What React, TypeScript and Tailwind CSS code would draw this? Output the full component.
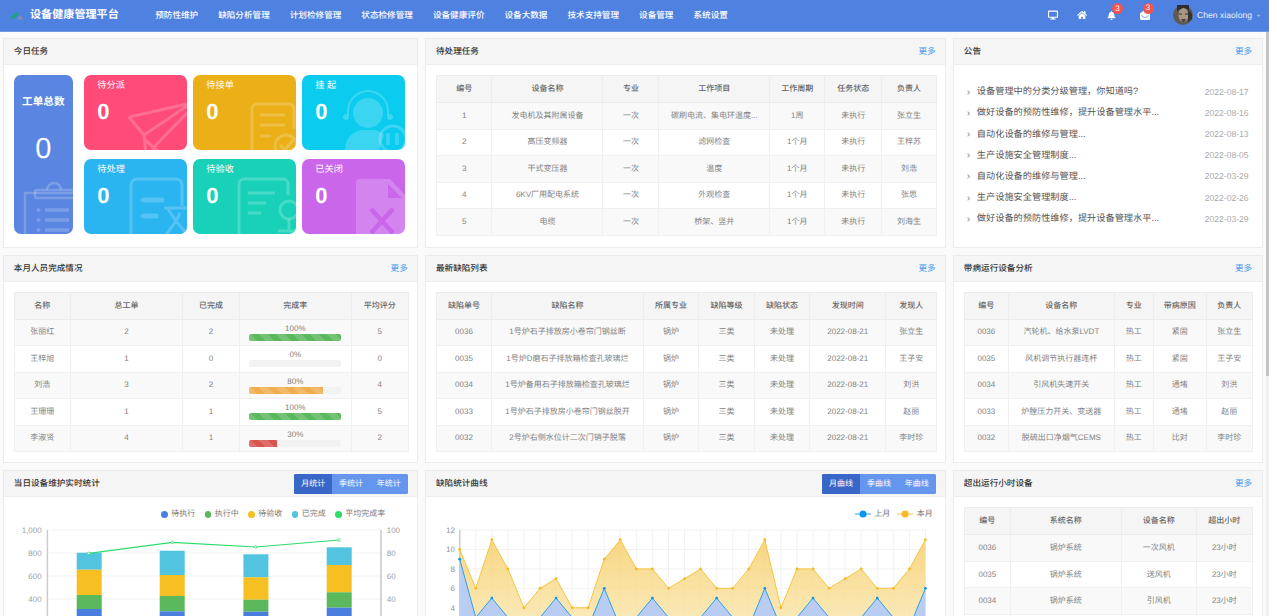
import React from "react";
import { FaBell, FaDesktop, FaEnvelopeOpen, FaHome, FaCaretDown, FaAngleRight } from "react-icons/fa";

const NAV = ["预防性维护", "缺陷分析管理", "计划检修管理", "状态检修管理", "设备健康评价", "设备大数据", "技术支持管理", "设备管理", "系统设置"];

function Logo() {
  return (
    <svg width="15" height="11" viewBox="0 0 15 11" className="shrink-0">
      <path d="M1 8 L7 2 L10 3.5 L4 9.5 Z" fill="#1fa37a" />
      <path d="M8 9.5 L11 5 L14.5 9.5 Z" fill="#7f8fb5" />
    </svg>
  );
}

function Avatar() {
  return (
    <svg width="20" height="20" viewBox="0 0 20 20" className="shrink-0">
      <circle cx="10" cy="10" r="10" fill="#5d5a55" />
      <path d="M4 0 H16 V6 C15 3 5 3 4 7 Z" fill="#2f2d2b" />
      <ellipse cx="10.5" cy="10" rx="5" ry="7" fill="#a89684" />
      <path d="M6 9 H9 M12 9 H15" stroke="#3b332c" strokeWidth="1" />
      <path d="M8 14 H13 L11.5 17 H9.5 Z" fill="#4c433b" />
      <path d="M15 4 L19 9 V14 L15 17 Z" fill="#35322f" />
    </svg>
  );
}

function Badge({ pos }: { pos: string }) {
  return (
    <span className={`absolute -top-[7.5px] flex h-[11px] w-[11px] items-center justify-center rounded-full bg-[#f0544c] text-[8px] leading-none text-white ${pos}`}>
      3
    </span>
  );
}

function Header() {
  return (
    <header className="flex h-[32px] shrink-0 items-center border-b border-[#7299e8] bg-[#4f81e0] pb-[1px] pl-[9px] text-white">
      <Logo />
      <div className="ml-[6px] w-[90px] text-[11.1px] font-bold whitespace-nowrap">设备健康管理平台</div>
      <nav className="ml-[35.2px] flex gap-[20px] text-[8.6px] font-medium whitespace-nowrap">
        {NAV.map((n) => (
          <span key={n}>{n}</span>
        ))}
      </nav>
      <div className="ml-auto flex items-center pr-[7px]">
        <FaDesktop className="mr-[19px] text-[10px]" />
        <FaHome className="mr-[20.6px] text-[10px]" />
        <span className="relative mr-[23.6px]">
          <FaBell className="text-[9px]" />
          <Badge pos="left-[4.6px]" />
        </span>
        <span className="relative mr-[23px]">
          <FaEnvelopeOpen className="text-[10px]" />
          <Badge pos="left-[2.5px]" />
        </span>
        <Avatar />
        <span className="ml-[4px] text-[8.6px] whitespace-nowrap text-[#e8eefb]">Chen xiaolong</span>
        <FaCaretDown className="ml-[3px] text-[7px] text-[#9db9ee]" />
      </div>
    </header>
  );
}

function Panel({ title, right, children }: { title: string; right?: React.ReactNode; children: React.ReactNode }) {
  return (
    <section className="min-w-0 border border-[#ececec] bg-white">
      <div className="flex h-[26px] items-center justify-between border-b border-[#eeeeee] bg-[#f5f5f5] pr-[9.5px] pl-[9.5px]">
        <span className="text-[8.6px] font-medium text-[#333333]">{title}</span>
        {right ?? <span className="text-[8.6px] text-[#4a9cec]">更多</span>}
      </div>
      {children}
    </section>
  );
}

function ButtonGroup({ items }: { items: string[] }) {
  return (
    <div className="flex h-[20px] w-[113.5px] overflow-hidden rounded-[1.5px] bg-[#6596ee] text-[8px] text-white">
      {items.map((t, i) => (
        <span key={t} className={i === 0 ? "flex flex-1 items-center justify-center bg-[#3867c8]" : "flex flex-1 items-center justify-center"}>
          {t}
        </span>
      ))}
    </div>
  );
}

function DataTable({ cols, heads, rows }: { cols: string[]; heads: string[]; rows: React.ReactNode[][] }) {
  return (
    <div className="px-[9.5px] pt-[10px]">
      <table className="w-full table-fixed border-collapse border border-[#eaeaea] text-center text-[8px]">
        <colgroup>
          {cols.map((c, i) => (
            <col key={i} className={c} />
          ))}
        </colgroup>
        <thead>
          <tr className="h-[27px] bg-[#f5f5f5]">
            {heads.map((h) => (
              <th key={h} className="border border-[#ececec] p-0 font-medium text-[#666666]">
                {h}
              </th>
            ))}
          </tr>
        </thead>
        <tbody>
          {rows.map((r, i) => (
            <tr key={i} className={i % 2 === 0 ? "h-[26.5px] bg-[#f9f9f9]" : "h-[26.5px] bg-white"}>
              {r.map((c, j) => (
                <td key={j} className="overflow-hidden border border-[#f0f0f0] p-0 whitespace-nowrap text-[#828282]">
                  {c}
                </td>
              ))}
            </tr>
          ))}
        </tbody>
      </table>
    </div>
  );
}

function Progress({ value, fill }: { value: number; fill: string }) {
  return (
    <div className="px-[9.5px]">
      <div className="text-[8px] leading-[10px] text-[#828282]">{value}%</div>
      <div className="h-[7px] overflow-hidden rounded-[2px] bg-[#f2f2f2]">
        <div className={fill} style={{ width: `${value}%` }} />
      </div>
    </div>
  );
}

const GREEN = "h-full bg-[#5cb85c] bg-[repeating-linear-gradient(45deg,rgba(255,255,255,.15)_0,rgba(255,255,255,.15)_6px,transparent_6px,transparent_12px)]";
const ORANGE = "h-full bg-[#f0ad4e] bg-[repeating-linear-gradient(45deg,rgba(255,255,255,.15)_0,rgba(255,255,255,.15)_6px,transparent_6px,transparent_12px)]";
const RED = "h-full bg-[#d9534f] bg-[repeating-linear-gradient(45deg,rgba(255,255,255,.15)_0,rgba(255,255,255,.15)_6px,transparent_6px,transparent_12px)]";

function StatCard({ label, bg, children }: { label: string; bg: string; children: React.ReactNode }) {
  return (
    <div className={`relative h-[74.5px] overflow-hidden rounded-[7px] pt-[4px] pl-[13.5px] text-white ${bg}`}>
      <div className="text-[9.2px] leading-[13px]">{label}</div>
      <div className="mt-[6.5px] text-[22px] leading-[26px] font-bold">0</div>
      <svg viewBox="0 0 103 74.5" className="absolute inset-0 h-full w-full" fill="none" stroke="#ffffff" strokeOpacity="0.2" strokeWidth="3">
        {children}
      </svg>
    </div>
  );
}

function TodayTasks() {
  return (
    <div className="flex gap-[11px] px-[9.5px] pt-[10px]">
      <div className="relative h-[159px] w-[59px] shrink-0 overflow-hidden rounded-[7px] bg-[#5a85e0] text-center text-white">
        <div className="mt-[19.5px] text-[10.6px] leading-[14px] font-bold">工单总数</div>
        <div className="mt-[23px] text-[29px] leading-[34px]">0</div>
        <svg viewBox="0 0 59 159" className="absolute inset-0 h-full w-full" fill="none" stroke="#ffffff" strokeOpacity="0.2" strokeWidth="2.5">
          <path d="M18 118 H11 V159 M59 118 H18" />
          <rect x="21" y="115" width="42" height="8" rx="2" />
          <path d="M33 115 a7 7 0 0 1 14 0" />
          <circle cx="24.5" cy="135" r="2" fill="#ffffff" fillOpacity="0.2" stroke="none" />
          <circle cx="24.5" cy="145" r="2" fill="#ffffff" fillOpacity="0.2" stroke="none" />
          <circle cx="24.5" cy="155" r="2" fill="#ffffff" fillOpacity="0.2" stroke="none" />
          <path d="M31 135 H55 M31 145 H55 M31 155 H55" strokeWidth="3.5" />
        </svg>
      </div>
      <div className="grid flex-1 grid-cols-[103px_103px_103px] gap-x-[6px] gap-y-[9.5px]">
        <StatCard label="待分派" bg="bg-[#ff4b78]">
          <path d="M45 42 L103 29 M45 42 L60 60 L103 31 M60 60 L62 80 M68 74 L103 38 M60 64 L76 78" />
        </StatCard>
        <StatCard label="待接单" bg="bg-[#ebb017]">
          <path d="M59 78 V34 a5 5 0 0 1 5 -5 H96 a5 5 0 0 1 5 5 V54" />
          <path d="M67 40 H92 M67 50 H92 M67 61 H78" />
          <circle cx="93" cy="71" r="11" />
          <path d="M87 70 L92 75 L100 65" />
        </StatCard>
        <StatCard label="挂 起" bg="bg-[#0bcbee]">
          <circle cx="66" cy="38" r="15" fill="#ffffff" fillOpacity="0.2" stroke="none" />
          <path d="M46 40 V36 a20 20 0 0 1 40 0 V40" strokeWidth="2" />
          <circle cx="44" cy="42" r="3" fill="#ffffff" fillOpacity="0.2" stroke="none" />
          <circle cx="88" cy="42" r="3" fill="#ffffff" fillOpacity="0.2" stroke="none" />
          <path d="M43 75 C43 62 52 55 62 55 H72 C76 55 80 57 82 60 L77 75 Z" fill="#ffffff" fillOpacity="0.2" stroke="none" />
          <circle cx="91" cy="64" r="13" />
          <path d="M86 58 V70 M95 58 V70" strokeWidth="3.5" />
        </StatCard>
        <StatCard label="待处理" bg="bg-[#2ab4f0]">
          <path d="M47 78 V26 a6 6 0 0 1 6 -6 H92 a6 6 0 0 1 6 6 V47" />
          <path d="M59 41 H78 M59 57 H72" strokeWidth="5" strokeLinecap="round" />
          <path d="M80 49 H103 M84 50 L92 62 L82 76 M96 54 L92 62 L102 74" />
        </StatCard>
        <StatCard label="待验收" bg="bg-[#19d1b8]">
          <path d="M46 78 V25 a5 5 0 0 1 5 -5 H90 a5 5 0 0 1 5 5 V36" />
          <path d="M55 34 H82 M55 44 H73 M55 54 H68" />
          <circle cx="96" cy="51" r="9" />
          <path d="M96 60 V71 M85 72 H103" />
        </StatCard>
        <StatCard label="已关闭" bg="bg-[#c966ea]">
          <path d="M54 78 V24 a4 4 0 0 1 4 -4 H88 L103 36 V78 Z" fill="#ffffff" fillOpacity="0.2" stroke="none" />
          <path d="M86 25 V39 H100 Z" fill="#c966ea" stroke="none" />
          <path d="M69 50 L91 74 M91 50 L69 74" stroke="#c966ea" strokeOpacity="1" strokeWidth="4.5" />
        </StatCard>
      </div>
    </div>
  );
}

const NOTICES: [string, string][] = [
  ["设备管理中的分类分级管理，你知道吗?", "2022-08-17"],
  ["做好设备的预防性维修，提升设备管理水平...", "2022-08-16"],
  ["自动化设备的维修与管理...", "2022-08-13"],
  ["生产设施安全管理制度...", "2022-08-05"],
  ["自动化设备的维修与管理...", "2022-03-29"],
  ["生产设施安全管理制度...", "2022-02-26"],
  ["做好设备的预防性维修，提升设备管理水平...", "2022-03-29"],
];

function Notices() {
  return (
    <ul className="pt-[16.5px] pr-[13px] pl-[11.5px]">
      {NOTICES.map(([t, d], i) => (
        <li key={i} className="flex h-[21.2px] items-center text-[9.2px] text-[#555555]">
          <FaAngleRight className="mr-[5.5px] w-[5.5px] text-[7px] text-[#aaaaaa]" />
          <span className="flex-1 whitespace-nowrap">{t}</span>
          <span className="text-[8.6px] text-[#aaaaaa]">{d}</span>
        </li>
      ))}
    </ul>
  );
}

function LegendDot({ color, label }: { color: string; label: string }) {
  return (
    <span className="flex items-center gap-[3.5px]">
      <span className={`h-[6.5px] w-[6.5px] rounded-full ${color}`} />
      {label}
    </span>
  );
}

const BARS = [
  { x: 77, s: [553.7, 570.7, 596, 610] },
  { x: 160, s: [551.7, 576, 597, 612.3] },
  { x: 243.7, s: [555.3, 578.3, 600.7, 612.7] },
  { x: 327, s: [548.3, 566, 593.3, 608.7] },
];

function BarChart() {
  const line: [number, number][] = [[89, 554.3], [172.7, 543.3], [256, 548], [339.3, 541]];
  return (
    <div>
      <div className="mt-[10px] flex h-[14px] items-center justify-end gap-[9.5px] pr-[32px] text-[8px] text-[#777777]">
        <LegendDot color="bg-[#4a7fe0]" label="待执行" />
        <LegendDot color="bg-[#5cb85c]" label="执行中" />
        <LegendDot color="bg-[#f6c022]" label="待验收" />
        <LegendDot color="bg-[#52c4e0]" label="已完成" />
        <LegendDot color="bg-[#2cdc6b]" label="平均完成率" />
      </div>
      <svg width="413" height="100" viewBox="4.3 522 413 100" className="block">
        {[531, 554, 577, 600].map((y) => (
          <line key={y} x1="47.7" x2="381.3" y1={y} y2={y} stroke="#f2f2f2" strokeWidth="1" />
        ))}
        <line x1="47.7" x2="47.7" y1="531" y2="622" stroke="#cccccc" strokeWidth="1.5" />
        <line x1="381.3" x2="381.3" y1="531" y2="622" stroke="#aaaaaa" strokeWidth="1" />
        {[["1,000", 531], ["800", 554], ["600", 577], ["400", 600]].map(([t, y]) => (
          <text key={t} x="42" y={Number(y) + 3} textAnchor="end" fontSize="8" fill="#a0a0a0" fontFamily="'Liberation Sans', sans-serif">
            {t}
          </text>
        ))}
        {[["100", 531], ["80", 554], ["60", 577], ["40", 600]].map(([t, y]) => (
          <text key={t} x="387" y={Number(y) + 3} fontSize="8" fill="#a0a0a0" fontFamily="'Liberation Sans', sans-serif">
            {t}
          </text>
        ))}
        {BARS.map((b) => (
          <g key={b.x}>
            <rect x={b.x} y={b.s[0]} width="25" height={b.s[1] - b.s[0]} fill="#52c4e0" />
            <rect x={b.x} y={b.s[1]} width="25" height={b.s[2] - b.s[1]} fill="#f6c022" />
            <rect x={b.x} y={b.s[2]} width="25" height={b.s[3] - b.s[2]} fill="#5cb85c" />
            <rect x={b.x} y={b.s[3]} width="25" height={630 - b.s[3]} fill="#4a7fe0" />
          </g>
        ))}
        <polyline points={line.map((p) => p.join(",")).join(" ")} fill="none" stroke="#2cdc6b" strokeWidth="1.2" />
        {line.map((p) => (
          <circle key={p[0]} cx={p[0]} cy={p[1]} r="1.3" fill="#ffffff" stroke="#2cdc6b" strokeWidth="0.7" />
        ))}
      </svg>
    </div>
  );
}

const YELLOW = [10, 6, 11, 8, 4, 6, 7, 4, 4, 9, 11, 8, 8, 6, 7, 8, 6, 6, 8, 11, 4, 8, 8, 6, 7, 8, 6, 6, 8, 11];
const BLUE = [9, 3, 5, 3, 2, 3, 5, 3, 2, 6, 2, 3, 5, 3, 2, 3, 5, 3, 2, 6, 2, 3, 5, 3, 2, 3, 5, 3, 2, 6];

function AreaChart() {
  const px = (i: number) => 460.7 + i * 16.06;
  const py = (v: number) => 531 + (12 - v) * 9.72;
  const pts = (s: number[]) => s.map((v, i) => `${px(i)},${py(v)}`).join(" ");
  return (
    <div>
      <div className="mt-[10px] flex h-[14px] items-center justify-end gap-[7px] pr-[12.5px] text-[8px] text-[#777777]">
        <span className="flex items-center gap-[3.5px]">
          <svg width="16" height="8" viewBox="0 0 16 8">
            <line x1="0" x2="16" y1="4" y2="4" stroke="#2f9fea" strokeWidth="1" />
            <circle cx="8" cy="4" r="3.5" fill="#0a96f0" />
          </svg>
          上月
        </span>
        <span className="flex items-center gap-[3.5px]">
          <svg width="16" height="8" viewBox="0 0 16 8">
            <line x1="0" x2="16" y1="4" y2="4" stroke="#f7c445" strokeWidth="1" />
            <circle cx="8" cy="4" r="3.5" fill="#f7b924" />
          </svg>
          本月
        </span>
      </div>
      <svg width="518" height="100" viewBox="427 522 518 100" className="block">
        <defs>
          <linearGradient id="yf" x1="0" y1="531" x2="0" y2="640" gradientUnits="userSpaceOnUse">
            <stop offset="0" stopColor="#f6cc62" stopOpacity="0.85" />
            <stop offset="1" stopColor="#f9e7b0" stopOpacity="0.75" />
          </linearGradient>
        </defs>
        {Array.from({ length: 30 }, (_, i) => (
          <line key={i} x1={px(i)} x2={px(i)} y1="531" y2="622" stroke="#efefef" strokeWidth="0.8" />
        ))}
        {[12, 10, 8, 6, 4].map((v) => (
          <line key={v} x1="460.7" x2="926.4" y1={py(v)} y2={py(v)} stroke="#efefef" strokeWidth="0.8" />
        ))}
        <line x1="460.7" x2="460.7" y1="531" y2="622" stroke="#cccccc" strokeWidth="1.5" />
        {[12, 10, 8, 6, 4].map((v) => (
          <text key={v} x="456" y={py(v) + 3} textAnchor="end" fontSize="8" fill="#909090" fontFamily="'Liberation Sans', sans-serif">
            {v}
          </text>
        ))}
        <polygon points={`460.7,640 ${pts(YELLOW)} 926.4,640`} fill="url(#yf)" />
        <polygon points={`460.7,640 ${pts(BLUE)} 926.4,640`} fill="#b9cdf3" />
        <polyline points={pts(YELLOW)} fill="none" stroke="#f7c445" strokeWidth="1" />
        <polyline points={pts(BLUE)} fill="none" stroke="#2f9fea" strokeWidth="1" />
        {YELLOW.map((v, i) => (
          <circle key={i} cx={px(i)} cy={py(v)} r="1.4" fill="#f7b924" />
        ))}
        {BLUE.map((v, i) => (
          <circle key={i} cx={px(i)} cy={py(v)} r="1.4" fill="#0a96f0" />
        ))}
      </svg>
    </div>
  );
}

const STAFF: React.ReactNode[][] = [
  ["张丽红", 2, 2, <Progress value={100} fill={GREEN} />, 5],
  ["王梓旭", 1, 0, <Progress value={0} fill={GREEN} />, 0],
  ["刘浩", 3, 2, <Progress value={80} fill={ORANGE} />, 4],
  ["王珊珊", 1, 1, <Progress value={100} fill={GREEN} />, 5],
  ["李淑贤", 4, 1, <Progress value={30} fill={RED} />, 2],
];

const PENDING: React.ReactNode[][] = [
  [1, "发电机及其附属设备", "一次", "碳刷电流、集电环温度...", "1周", "未执行", "张立生"],
  [2, "高压变频器", "一次", "滤网检查", "1个月", "未执行", "王梓苏"],
  [3, "干式变压器", "一次", "温度", "1个月", "未执行", "刘浩"],
  [4, "6KV厂用配电系统", "一次", "外观检查", "1个月", "未执行", "张思"],
  [5, "电缆", "一次", "桥架、竖井", "1个月", "未执行", "刘海生"],
];

const DEFECTS: React.ReactNode[][] = [
  ["0036", "1号炉石子排放房小卷帘门钢丝断", "锅炉", "三类", "未处理", "2022-08-21", "张立生"],
  ["0035", "1号炉D磨石子排放箱检查孔玻璃烂", "锅炉", "三类", "未处理", "2022-08-21", "王子安"],
  ["0034", "1号炉备用石子排放箱检查孔玻璃烂", "锅炉", "三类", "未处理", "2022-08-21", "刘洪"],
  ["0033", "1号炉石子排放房小卷帘门钢丝脱开", "锅炉", "三类", "未处理", "2022-08-21", "赵丽"],
  ["0032", "2号炉右侧水位计二次门销子脱落", "锅炉", "三类", "未处理", "2022-08-21", "李时珍"],
];

const SICK: React.ReactNode[][] = [
  ["0036", "汽轮机、给水泵LVDT", "热工", "紧固", "张立生"],
  ["0035", "风机调节执行器连杆", "热工", "紧固", "王子安"],
  ["0034", "引风机失速开关", "热工", "通堵", "刘洪"],
  ["0033", "炉膛压力开关、变送器", "热工", "通堵", "赵丽"],
  ["0032", "脱硫出口净烟气CEMS", "热工", "比对", "李时珍"],
];

const OVER: React.ReactNode[][] = [
  ["0036", "锅炉系统", "一次风机", "23小时"],
  ["0035", "锅炉系统", "送风机", "23小时"],
  ["0034", "锅炉系统", "引风机", "23小时"],
  ["", "", "", ""],
];

export default function App() {
  return (
    <div className="flex h-[616px] w-full flex-col overflow-hidden bg-[#fafafa] font-['Liberation_Sans','Noto_Sans_CJK_SC',sans-serif] [text-rendering:geometricPrecision]">
      <Header />
      <div className="flex min-h-0 flex-1">
        <main className="grid flex-1 grid-cols-[415px_520.7px_309.3px] grid-rows-[209.7px_208.6px_209px] gap-x-[7.2px] gap-y-[7px] pt-[6px] pl-[3.3px]">
          <Panel title="今日任务" right={<span />}>
            <TodayTasks />
          </Panel>
          <Panel title="待处理任务">
            <DataTable
              cols={["w-[55.5px]", "w-[111px]", "w-[56px]", "w-[110.5px]", "w-[55.5px]", "w-[56.5px]", "w-[55px]"]}
              heads={["编号", "设备名称", "专业", "工作项目", "工作周期", "任务状态", "负责人"]}
              rows={PENDING}
            />
          </Panel>
          <Panel title="公告">
            <Notices />
          </Panel>
          <Panel title="本月人员完成情况">
            <DataTable
              cols={["w-[56px]", "w-[112.5px]", "w-[56.5px]", "w-[112px]", "w-[57px]"]}
              heads={["名称", "总工单", "已完成", "完成率", "平均评分"]}
              rows={STAFF}
            />
          </Panel>
          <Panel title="最新缺陷列表">
            <DataTable
              cols={["w-[55px]", "w-[152px]", "w-[55px]", "w-[56px]", "w-[55px]", "w-[76.5px]", "w-[50.5px]"]}
              heads={["缺陷单号", "缺陷名称", "所属专业", "缺陷等级", "缺陷状态", "发现时间", "发现人"]}
              rows={DEFECTS}
            />
          </Panel>
          <Panel title="带病运行设备分析">
            <DataTable
              cols={["w-[44px]", "w-[106px]", "w-[39px]", "w-[53px]", "w-[46px]"]}
              heads={["编号", "设备名称", "专业", "带病原因", "负责人"]}
              rows={SICK}
            />
          </Panel>
          <Panel title="当日设备维护实时统计" right={<ButtonGroup items={["月统计", "季统计", "年统计"]} />}>
            <BarChart />
          </Panel>
          <Panel title="缺陷统计曲线" right={<ButtonGroup items={["月曲线", "季曲线", "年曲线"]} />}>
            <AreaChart />
          </Panel>
          <Panel title="超出运行小时设备">
            <DataTable
              cols={["w-[46px]", "w-[111px]", "w-[75px]", "w-[56px]"]}
              heads={["编号", "系统名称", "设备名称", "超出小时"]}
              rows={OVER}
            />
          </Panel>
        </main>
        <div className="w-[3px] shrink-0 bg-[#f0f0f0]">
          <div className="h-[344px] bg-[#c4c4c4]" />
        </div>
      </div>
    </div>
  );
}
